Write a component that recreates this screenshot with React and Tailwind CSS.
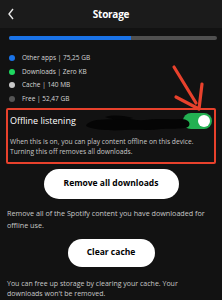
import React from "react";

const legend = [
  { color: "bg-[#1a73e8]", label: "Other apps | 75,25 GB" },
  { color: "bg-[#1ed760]", label: "Downloads | Zero KB" },
  { color: "bg-[#c8c8c8]", label: "Cache | 140 MB" },
  { color: "bg-[#555555]", label: "Free | 52,47 GB" },
];

export default function App() {
  return (
    <div
      className="relative w-[222px] h-[300px] overflow-hidden bg-[#121212] text-white"
      style={{ fontFamily: '"Open Sans", "Liberation Sans", sans-serif' }}
    >
      {/* header */}
      <div className="relative flex items-center justify-center h-[28px] bg-[#1b1b1b]">
        <svg className="absolute left-[7px] top-[8px]" width="8" height="12" viewBox="0 0 8 12">
          <path d="M6 1 L2 6 L6 11" stroke="#e8e8e8" strokeWidth="1.4" fill="none" />
        </svg>
        <span className="text-[10px] font-bold tracking-tight">Storage</span>
      </div>

      <div className="px-[9px] pt-[8px]">
        {/* bar */}
        <div className="flex h-[4px] w-[208px] rounded-full overflow-hidden bg-[#505050]">
          <div className="w-[122px] bg-[#1a73e8]" />
        </div>

        {/* legend */}
        <div className="flex flex-col gap-[5.5px] mt-[14px]">
          {legend.map((l) => (
            <div key={l.label} className="flex items-center gap-[7px] h-[8px]">
              <span className={`w-[6px] h-[6px] rounded-full ${l.color}`} />
              <span className="text-[6.5px] text-[#d6d6d6]">{l.label}</span>
            </div>
          ))}
        </div>
      </div>

      {/* offline listening box */}
      <div className="relative mx-[6px] mt-[5px] h-[56px] border-2 border-[#e8412c] rounded-[2px] px-[2px] pt-[3px]">
        <div className="flex items-center justify-between h-[17px]">
          <span className="text-[9px] font-medium">Offline listening</span>
          <div className="flex items-center justify-end w-[29px] h-[16px] rounded-full bg-[#23b152] pr-[2px]">
            <div className="w-[12px] h-[12px] rounded-full bg-white" />
          </div>
        </div>
        <svg className="absolute left-[77px] top-[2px]" width="108" height="22" viewBox="0 0 108 22">
          <path
            d="M2 12 C10 6 20 8 30 7 C42 5 50 9 60 8 C72 6 84 8 96 7 C102 7 106 10 104 14 C100 18 88 16 76 17 C64 19 52 17 40 18 C28 19 14 18 6 16 C2 15 0 14 2 12 Z"
            fill="#050505"
          />
          <path d="M20 5 C30 2 40 4 48 6 C40 9 28 8 20 5 Z" fill="#050505" />
        </svg>
        <p className="mt-[7px] text-[6.7px] leading-[10px] text-[#c8c8c8] whitespace-nowrap">
          When this is on, you can play content offline on this device.
          <br />
          Turning this off removes all downloads.
        </p>
      </div>

      {/* remove all downloads */}
      <div className="flex justify-center mt-[5px]">
        <div className="flex items-center justify-center w-[135px] h-[30px] rounded-full bg-white text-black text-[8.5px] font-bold">
          Remove all downloads
        </div>
      </div>
      <p className="px-[7px] mt-[8px] text-[7.2px] leading-[12px] text-[#c8c8c8] whitespace-nowrap">
        Remove all of the Spotify content you have downloaded for
        <br />
        offline use.
      </p>

      {/* clear cache */}
      <div className="flex justify-center mt-[8px]">
        <div className="flex items-center justify-center w-[87px] h-[28px] rounded-full bg-white text-black text-[8.5px] font-bold">
          Clear cache
        </div>
      </div>
      <p className="px-[7px] mt-[12px] text-[7px] leading-[10px] text-[#c8c8c8] whitespace-nowrap">
        You can free up storage by clearing your cache. Your
        <br />
        downloads won't be removed.
      </p>

      {/* annotation arrow */}
      <svg className="absolute left-0 top-0" width="222" height="300" viewBox="0 0 222 300">
        <path d="M174 67 L196 103" stroke="#e8412c" strokeWidth="3.2" strokeLinecap="round" />
        <path d="M176 97 L199 109 L202 84" stroke="#e8412c" strokeWidth="3.2" strokeLinecap="round" strokeLinejoin="round" fill="none" />
      </svg>
    </div>
  );
}
